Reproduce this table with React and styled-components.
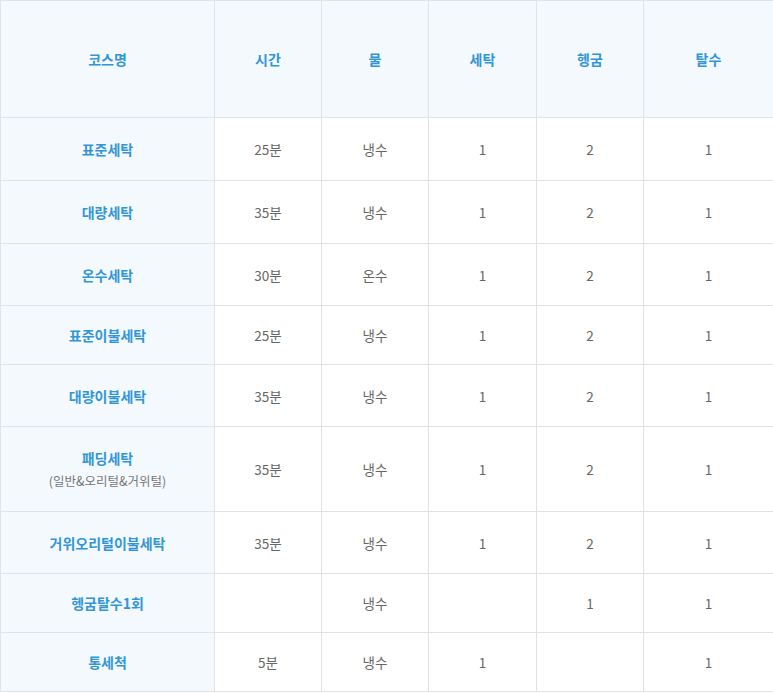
import styled, { createGlobalStyle } from "styled-components";

const GlobalStyle = createGlobalStyle`
  html, body {
    margin: 0;
    padding: 0;
    background: #fff;
  }
  body {
    font-family: "Noto Sans CJK KR", "Noto Sans", sans-serif;
  }
`;

const courses = [
  { name: "표준세탁", time: "25분", water: "냉수", wash: "1", rinse: "2", spin: "1", h: 63 },
  { name: "대량세탁", time: "35분", water: "냉수", wash: "1", rinse: "2", spin: "1", h: 63 },
  { name: "온수세탁", time: "30분", water: "온수", wash: "1", rinse: "2", spin: "1", h: 62 },
  { name: "표준이불세탁", time: "25분", water: "냉수", wash: "1", rinse: "2", spin: "1", h: 59 },
  { name: "대량이불세탁", time: "35분", water: "냉수", wash: "1", rinse: "2", spin: "1", h: 62 },
  { name: "패딩세탁", sub: "(일반&오리털&거위털)", time: "35분", water: "냉수", wash: "1", rinse: "2", spin: "1", h: 85 },
  { name: "거위오리털이불세탁", time: "35분", water: "냉수", wash: "1", rinse: "2", spin: "1", h: 62 },
  { name: "헹굼탈수1회", time: "", water: "냉수", wash: "", rinse: "1", spin: "1", h: 59 },
  { name: "통세척", time: "5분", water: "냉수", wash: "1", rinse: "", spin: "1", h: 59 },
];

const headers = ["코스명", "시간", "물", "세탁", "헹굼", "탈수"];
const widths = [214, 107, 107, 108, 107, 130];

export default function App() {
  return (
    <>
      <GlobalStyle />
      <Table>
        <colgroup>
          {widths.map((w, i) => (
            <col key={i} style={{ width: w }} />
          ))}
        </colgroup>
        <thead>
          <tr>
            {headers.map((h) => (
              <HeadCell key={h}>{h}</HeadCell>
            ))}
          </tr>
        </thead>
        <tbody>
          {courses.map((c) => (
            <Row key={c.name} $h={c.h}>
              <NameCell>
                {c.name}
                {c.sub && <SubText>{c.sub}</SubText>}
              </NameCell>
              <Cell>{c.time}</Cell>
              <Cell>{c.water}</Cell>
              <Cell>{c.wash}</Cell>
              <Cell>{c.rinse}</Cell>
              <Cell>{c.spin}</Cell>
            </Row>
          ))}
        </tbody>
      </Table>
    </>
  );
}

const Table = styled.table`
  width: 773px;
  border-collapse: collapse;
  table-layout: fixed;
  border-top: 1px solid #dfe4ea;
`;

const HeadCell = styled.th`
  height: 116px;
  padding: 0;
  background: #f4f9fe;
  border: 1px solid #dfe4ea;
  border-top: none;
  color: #3296d6;
  font-size: 14px;
  font-weight: 700;
  text-align: center;
  vertical-align: middle;
`;

const Row = styled.tr`
  height: ${(p) => p.$h}px;
`;

const Cell = styled.td`
  padding: 0;
  border: 1px solid #e2e2e2;
  color: #666;
  font-size: 13.5px;
  text-align: center;
  vertical-align: middle;
`;

const NameCell = styled(Cell)`
  background: #f4f9fe;
  border-color: #dfe4ea;
  color: #3296d6;
  font-size: 14px;
  font-weight: 700;
`;

const SubText = styled.div`
  margin-top: 3px;
  color: #777;
  font-size: 12.5px;
  font-weight: 400;
`;
